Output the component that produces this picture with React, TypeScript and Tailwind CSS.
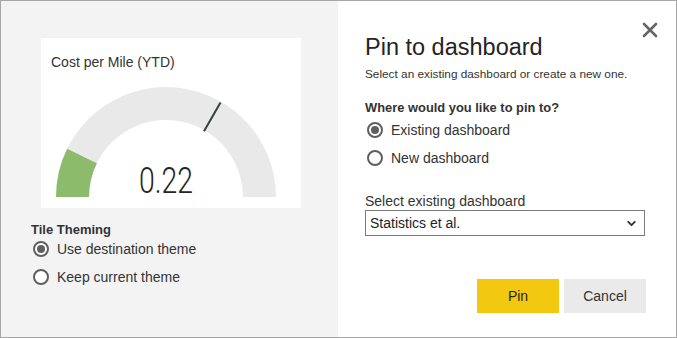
import React from "react";
import { ChevronDown, X } from "lucide-react";

const font = { fontFamily: '"Liberation Sans", Arial, sans-serif' };

const Radio = ({ checked, label }: { checked?: boolean; label: string }) => (
  <div className="flex items-center h-[20px]">
    <span className="ml-[2px] w-[16px] h-[16px] rounded-full border-2 border-[#5f5f5f] flex items-center justify-center bg-white">
      {checked && <span className="w-[8px] h-[8px] rounded-full bg-[#5f5f5f]" />}
    </span>
    <span className="ml-[8px] text-[14px] text-[#333333]">{label}</span>
  </div>
);

const Gauge = () => (
  <svg width="260" height="136" viewBox="0 0 260 136">
    <path d="M15 125 A110 110 0 0 1 235 125 L202 125 A77 77 0 0 0 48 125 Z" fill="#e9e9e9" />
    <path d="M15 125 A110 110 0 0 1 26.1 76.8 L55.8 91.2 A77 77 0 0 0 48 125 Z" fill="#8dbb6c" />
    <line x1="163" y1="59.2" x2="179.5" y2="30.6" stroke="#37413f" strokeWidth="2" />
    <text
      x="98"
      y="121"
      textLength="54"
      lengthAdjust="spacingAndGlyphs"
      fontSize="37"
      fontWeight="300"
      fill="#252423"
      style={{ fontFamily: "Roboto, sans-serif" }}
    >
      0.22
    </text>
  </svg>
);

export default function App() {
  return (
    <div style={font} className="w-[677px] h-[338px] border border-[#a6a6a6] flex bg-white text-[#252423]">
      {/* left: tile preview */}
      <div className="w-[337px] h-full bg-[#f3f3f3] flex flex-col">
        <div className="ml-[40px] mt-[37px] w-[260px] h-[170px] bg-white flex flex-col">
          <div className="pl-[10px] pt-[14px] text-[14px] leading-[20px] text-[#333333]">Cost per Mile (YTD)</div>
          <Gauge />
        </div>
        <div className="pl-[30px] flex flex-col">
          <div className="mt-[13px] text-[13px] leading-[18px] font-semibold text-[#333333]">Tile Theming</div>
          <Radio checked label="Use destination theme" />
          <div className="mt-[8px]">
            <Radio label="Keep current theme" />
          </div>
        </div>
      </div>

      {/* right: form */}
      <div className="relative flex-1 flex flex-col pt-[30px] pl-[27px] pr-[30px]">
        <button className="absolute top-[17px] right-[14px] w-[24px] h-[24px] flex items-center justify-center text-[#666666]">
          <X size={24} strokeWidth={2.6} />
        </button>
        <h1 className="text-[23.5px] leading-[32px] text-[#252423]">Pin to dashboard</h1>
        <p className="mt-[3px] text-[11.8px] leading-[16px] text-[#333333]">
          Select an existing dashboard or create a new one.
        </p>
        <div className="mt-[17px] text-[12.9px] leading-[18px] font-semibold text-[#333333]">
          Where would you like to pin to?
        </div>
        <div className="mt-[3px]">
          <Radio checked label="Existing dashboard" />
        </div>
        <div className="mt-[8px]">
          <Radio label="New dashboard" />
        </div>
        <div className="mt-[24px] text-[14px] leading-[18px] text-[#333333]">Select existing dashboard</div>
        <div className="w-[280px] h-[26px] border border-[#7a7a7a] flex items-center justify-between pl-[4px] pr-[6px] text-[14px] text-[#252423]">
          <span>Statistics et al.</span>
          <ChevronDown size={13} strokeWidth={3.5} className="text-[#333333]" />
        </div>
        <div className="mt-[43px] flex justify-end gap-[5px]">
          <button className="w-[82px] h-[34px] bg-[#f2c811] text-[14px] text-[#252423]">Pin</button>
          <button className="w-[82px] h-[34px] bg-[#eaeaea] text-[14px] text-[#333333]">Cancel</button>
        </div>
      </div>
    </div>
  );
}
